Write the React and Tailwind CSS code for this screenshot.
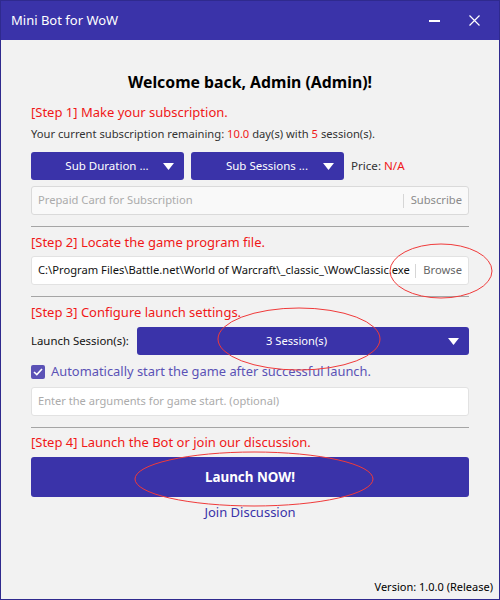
import React from 'react';

const font = { fontFamily: '"Noto Sans", "Open Sans", sans-serif' };

function Caret() {
  return (
    <svg width="11" height="7" viewBox="0 0 11 7" className="shrink-0">
      <path d="M0 0 L11 0 L5.5 7 Z" fill="#fff" />
    </svg>
  );
}

function Step({ children, className = '' }) {
  return <p className={`text-[13px] leading-[20px] text-[#f01818] ${className}`}>{children}</p>;
}

function Rule({ className = '' }) {
  return <div className={`h-px bg-[#a5a5a5] ${className}`} />;
}

export default function App() {
  return (
    <div className="w-[500px] h-[600px] border border-[#2f2a8e] bg-[#f2f2f2] flex flex-col relative overflow-hidden" style={font}>
      {/* title bar */}
      <div className="h-[39px] bg-[#3a33a9] flex items-center pl-[10px] text-white">
        <span className="text-[13px]">Mini Bot for WoW</span>
        <div className="ml-auto flex items-center">
          <div className="w-[40px] flex justify-center">
            <div className="w-[11px] h-[2px] bg-white" />
          </div>
          <div className="w-[40px] flex justify-center mr-[5px]">
            <svg width="11" height="11" viewBox="0 0 11 11">
              <path d="M0.5 0.5 L10.5 10.5 M10.5 0.5 L0.5 10.5" stroke="#fff" strokeWidth="1.2" />
            </svg>
          </div>
        </div>
      </div>

      <div className="flex-1 flex flex-col px-[30px]">
        <h1 className="pt-[32px] text-center font-bold text-[15.8px] leading-[20px] text-black">
          Welcome back, Admin (Admin)!
        </h1>

        <Step className="mt-[10px]">[Step 1] Make your subscription.</Step>
        <p className="mt-[4px] text-[11.2px] leading-[16px] text-[#333]">
          Your current subscription remaining: <span className="text-[#f01818]">10.0</span> day(s) with{' '}
          <span className="text-[#f01818]">5</span> session(s).
        </p>

        <div className="mt-[10px] flex items-center gap-[7px]">
          <button className="w-[153px] h-[28px] rounded-[3px] bg-[#3a33a9] text-white text-[11.5px] flex items-center pl-[20px] pr-[10px]">
            <span className="flex-1 text-center">Sub Duration ...</span>
            <Caret />
          </button>
          <button className="w-[153px] h-[28px] rounded-[3px] bg-[#3a33a9] text-white text-[11.5px] flex items-center pl-[20px] pr-[10px]">
            <span className="flex-1 text-center">Sub Sessions ...</span>
            <Caret />
          </button>
          <span className="text-[11.6px] text-[#333]">
            Price: <span className="text-[#f01818]">N/A</span>
          </span>
        </div>

        <div className="mt-[6px] h-[29px] rounded-[3px] border border-[#dadada] bg-[#f9f9f9] flex items-center pl-[6px] text-[11.2px]">
          <span className="flex-1 text-[#ababab]">Prepaid Card for Subscription</span>
          <div className="w-px h-[14px] bg-[#d6d6d6]" />
          <span className="pl-[7px] pr-[6px] text-[#8a8a8a]">Subscribe</span>
        </div>

        <Rule className="mt-[11px]" />

        <Step className="mt-[5px]">[Step 2] Locate the game program file.</Step>
        <div className="mt-[4px] h-[29px] rounded-[3px] border border-[#e2e2e2] bg-white flex items-center pl-[6px] text-[11.2px]">
          <span className="flex-1 min-w-0 overflow-hidden whitespace-nowrap text-[#111]">
            C:\Program Files\Battle.net\World of Warcraft\_classic_\WowClassic.exe
          </span>
          <div className="ml-[4px] w-px h-[14px] bg-[#d6d6d6]" />
          <span className="pl-[7px] pr-[6px] text-[#666]">Browse</span>
        </div>

        <Rule className="mt-[11px]" />

        <Step className="mt-[5px]">[Step 3] Configure launch settings.</Step>
        <div className="mt-[5px] flex items-center">
          <span className="w-[106px] text-[11.4px] text-[#111]">Launch Session(s):</span>
          <button className="flex-1 h-[28px] rounded-[3px] bg-[#3a33a9] text-white text-[11.2px] flex items-center pl-[8px] pr-[10px]">
            <span className="flex-1 text-center">3 Session(s)</span>
            <Caret />
          </button>
        </div>

        <label className="mt-[7px] h-[20px] flex items-center gap-[6px]">
          <span className="w-[14px] h-[14px] rounded-[2px] bg-[#5b52b6] flex items-center justify-center">
            <svg width="10" height="8" viewBox="0 0 10 8">
              <path d="M1 4 L3.8 6.6 L9 1" stroke="#fff" strokeWidth="1.6" fill="none" />
            </svg>
          </span>
          <span className="text-[12.9px] text-[#5b52b6]">Automatically start the game after successful launch.</span>
        </label>

        <div className="mt-[5px] h-[29px] rounded-[3px] border border-[#e2e2e2] bg-white flex items-center pl-[6px] text-[11.1px] text-[#ababab]">
          Enter the arguments for game start. (optional)
        </div>

        <Rule className="mt-[11px]" />

        <Step className="mt-[4px]">[Step 4] Launch the Bot or join our discussion.</Step>
        <button className="mt-[5px] h-[40px] rounded-[3px] bg-[#3a33a9] text-white font-bold text-[13.4px]">
          Launch NOW!
        </button>
        <a className="mt-[5px] self-center text-[13px] leading-[20px] text-[#3a33a9]">Join Discussion</a>

        <p className="mt-auto mb-[4px] -mr-[24px] self-end text-[11px] leading-[16px] text-black">
          Version: 1.0.0 (Release)
        </p>
      </div>

      {/* red annotation ellipses */}
      <svg className="absolute left-0 top-0 pointer-events-none" width="500" height="600">
        <ellipse cx="440" cy="270" rx="51" ry="27" fill="none" stroke="#f03a3a" strokeWidth="1" />
        <ellipse cx="298" cy="338" rx="81" ry="31" fill="none" stroke="#f03a3a" strokeWidth="1" />
        <ellipse cx="253" cy="478" rx="119" ry="27" fill="none" stroke="#f03a3a" strokeWidth="1" />
      </svg>
    </div>
  );
}
